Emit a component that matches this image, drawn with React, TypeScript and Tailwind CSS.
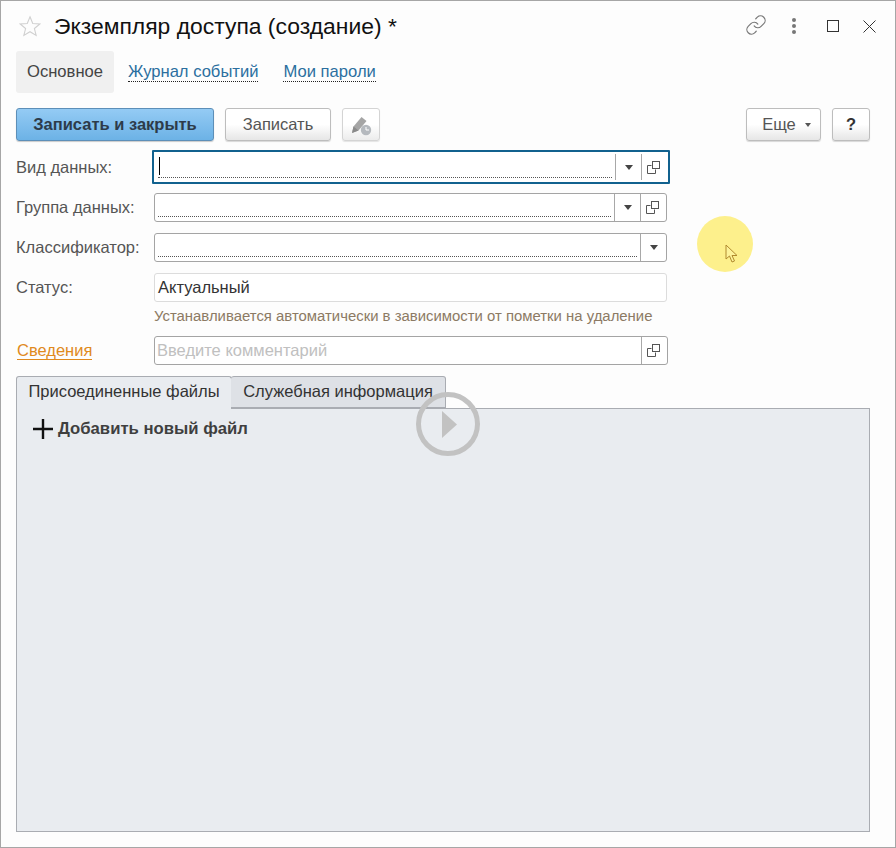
import { Link } from 'lucide-react';

function CopyIcon() {
  return (
    <svg className="mr-[2px]" width="13" height="13" viewBox="0 0 13 13" fill="none" stroke="#555" strokeWidth="1">
      <path d="M4.5 4.5H.5v8h8V8.5" />
      <rect x="5.5" y=".5" width="7" height="7" />
    </svg>
  );
}

function Caret() {
  return (
    <svg width="8" height="5" viewBox="0 0 8 5">
      <path d="M0 0h8L4 5z" fill="#444" />
    </svg>
  );
}

function SideButton({ children }: { children: React.ReactNode }) {
  return (
    <div className="flex h-full w-[26px] shrink-0 items-center justify-center border-l border-[#a8a8a8]">
      {children}
    </div>
  );
}

function Label({ children }: { children: React.ReactNode }) {
  return <div className="w-[138px] shrink-0 text-[16.5px] text-[#555]">{children}</div>;
}

function Dotted() {
  return (
    <div className="relative mr-[3px] h-[19px] flex-1">
      <div className="absolute inset-x-0 bottom-0 border-b border-dotted border-[#555]" />
    </div>
  );
}

function PencilClock() {
  return (
    <svg width="22" height="22" viewBox="0 0 22 22">
      <path d="M2 19l1.5-6.5L11.5 3l5 4-8 9.5z" fill="#a5a5a5" />
      <path d="M2 19l1.5-6.5 5 4z" fill="#8a8a8a" />
      <circle cx="16" cy="16" r="5.2" fill="#b5b9be" />
      <path d="M16 13v3h3" stroke="#fff" strokeWidth="1" fill="none" />
    </svg>
  );
}

export default function App() {
  return (
    <div className="relative flex h-[848px] w-[896px] flex-col border border-[#a6a6a6] bg-[#fdfdfd] font-['Liberation_Sans',sans-serif]">
      <div className="flex h-[50px] shrink-0 items-center pl-[18px] pr-[19px]">
        <svg width="22" height="22" viewBox="0 0 24 24" fill="none" stroke="#d0d0d0" strokeWidth="1.2">
          <path d="M12 2l3 7.2 7.7.6-5.9 5 1.9 7.5L12 18.2l-6.7 4.1 1.9-7.5-5.9-5L9 9.2z" />
        </svg>
        <h1 className="ml-[13px] text-[22.9px] font-normal leading-none text-[#111]">Экземпляр доступа (создание) *</h1>
        <div className="ml-auto flex items-center">
          <Link className="-mt-[3px] h-[22px] w-[22px] text-[#777]" strokeWidth={1.3} />
          <div className="ml-[25px] flex flex-col gap-[2px]">
            <div className="h-[4px] w-[4px] rounded-full bg-[#777]" />
            <div className="h-[4px] w-[4px] rounded-full bg-[#777]" />
            <div className="h-[4px] w-[4px] rounded-full bg-[#777]" />
          </div>
          <div className="ml-[31px] h-[12px] w-[12px] border border-[#333]" />
          <svg className="ml-[24px]" width="13" height="13" viewBox="0 0 13 13" stroke="#333" strokeWidth="1">
            <path d="M.5.5l12 12M12.5.5l-12 12" />
          </svg>
        </div>
      </div>

      <nav className="ml-[15px] flex h-[42px] shrink-0 items-center text-[16.6px]">
        <div className="flex h-[42px] w-[98px] items-center justify-center rounded-[3px] bg-[#f0f0f0] text-[#444]">Основное</div>
        <a className="ml-[14px] border-b border-dotted border-[#222] leading-[18px] text-[#2b6f9f]">Журнал событий</a>
        <a className="ml-[25px] border-b border-dotted border-[#222] leading-[18px] text-[#2b6f9f]">Мои пароли</a>
      </nav>

      <div className="ml-[15px] mr-[25px] mt-[15px] flex h-[33px] shrink-0 items-stretch text-[16.5px]">
        <button className="w-[198px] rounded-[3px] border border-[#5d8fb8] bg-gradient-to-b from-[#94cbf4] to-[#6cb2e6] font-bold text-[#2d3b4a] shadow-[0_1px_1px_rgba(0,0,0,0.2)]">
          Записать и закрыть
        </button>
        <button className="ml-[11px] w-[106px] rounded-[3px] border border-[#bdbdbd] bg-gradient-to-b from-white via-white to-[#e6e6e6] text-[#555] shadow-[0_1px_1px_rgba(0,0,0,0.15)]">
          Записать
        </button>
        <button className="ml-[11px] flex w-[38px] items-center justify-center rounded-[3px] border border-[#d4d4d4] bg-gradient-to-b from-white via-white to-[#ececec] shadow-[0_1px_1px_rgba(0,0,0,0.1)]">
          <PencilClock />
        </button>
        <button className="ml-auto flex w-[75px] items-center justify-center gap-[9px] rounded-[3px] border border-[#bdbdbd] bg-gradient-to-b from-white via-white to-[#e6e6e6] pl-[6px] text-[#555] shadow-[0_1px_1px_rgba(0,0,0,0.15)]">
          Еще
          <svg width="6" height="4" viewBox="0 0 6 4"><path d="M0 0h6L3 4z" fill="#555" /></svg>
        </button>
        <button className="ml-[11px] w-[38px] rounded-[3px] border border-[#bdbdbd] bg-gradient-to-b from-white via-white to-[#e6e6e6] font-bold text-[#333] shadow-[0_1px_1px_rgba(0,0,0,0.15)]">
          ?
        </button>
      </div>

      <div className="ml-[15px] mt-[9px] flex shrink-0 flex-col">
        <div className="flex h-[34px] items-center">
          <Label>Вид данных:</Label>
          <div className="-ml-[2px] flex h-[34px] w-[518px] items-center rounded-[1px] border-2 border-[#11618e] bg-white py-[2px] pl-[4px] pr-[1px]">
            <div className="relative mr-[3px] h-[22px] flex-1">
              <div className="ml-[1px] mt-[1px] h-[18px] w-[1px] bg-black" />
              <div className="absolute inset-x-0 bottom-0 border-b border-dotted border-[#555]" />
            </div>
            <SideButton><Caret /></SideButton>
            <SideButton><CopyIcon /></SideButton>
          </div>
        </div>
        <div className="mt-[9px] flex h-[29px] items-center">
          <Label>Группа данных:</Label>
          <div className="flex h-[29px] w-[513px] items-center rounded-[3px] border border-[#a4a4a4] bg-white pl-[3px]">
            <Dotted />
            <SideButton><Caret /></SideButton>
            <SideButton><CopyIcon /></SideButton>
          </div>
        </div>
        <div className="mt-[11px] flex h-[29px] items-center">
          <Label>Классификатор:</Label>
          <div className="flex h-[29px] w-[513px] items-center rounded-[3px] border border-[#a4a4a4] bg-white pl-[3px]">
            <Dotted />
            <SideButton><Caret /></SideButton>
          </div>
        </div>
        <div className="mt-[11px] flex h-[29px] items-center">
          <Label>Статус:</Label>
          <div className="flex h-[29px] w-[513px] items-center rounded-[3px] border border-[#dcdcdc] bg-white pl-[3px] text-[16.5px] text-[#333]">
            Актуальный
          </div>
        </div>
        <div className="ml-[138px] mt-[6px] h-[17px] text-[14.9px] leading-[17px] text-[#8c7a64]">
          Устанавливается автоматически в зависимости от пометки на удаление
        </div>
        <div className="mt-[11px] flex h-[29px] items-center">
          <a className="ml-[1px] w-[137px] shrink-0 text-[16.5px] leading-[19px] text-[#e08a1e]">
            <span className="border-b border-[#e08a1e]">Сведения</span>
          </a>
          <div className="flex h-[29px] w-[514px] items-center rounded-[3px] border border-[#a4a4a4] bg-white pl-[2px] text-[16.5px] text-[#c0c0c0]">
            <span className="flex-1">Введите комментарий</span>
            <SideButton><CopyIcon /></SideButton>
          </div>
        </div>
      </div>

      <div className="mb-[15px] ml-[15px] mr-[25px] mt-[11px] flex min-h-0 flex-1 flex-col">
        <div className="relative z-10 flex h-[33px] shrink-0 text-[16.5px]">
          <div className="flex w-[216px] items-center justify-center rounded-t-[3px] border border-b-0 border-[#a9acb2] bg-[#e9ecf0] pb-[3px] text-[#333]">
            Присоединенные файлы
          </div>
          <div className="-ml-[1px] flex h-[32px] w-[215px] items-center justify-center rounded-t-[3px] border border-l-0 border-[#a9acb2] bg-[#dee1e6] pb-[2px] text-[#333]">
            Служебная информация
          </div>
        </div>
        <div className="-mt-[1px] flex-1 border border-[#a9acb2] bg-[#e9ecf0] pl-[16px] pt-[8px]">
          <div className="flex items-center text-[16.7px] font-bold text-[#3f3f3f]">
            <svg width="20" height="20" viewBox="0 0 20 20" stroke="#111" strokeWidth="2.4">
              <path d="M10 0v20M0 10h20" />
            </svg>
            <span className="ml-[5px] -mt-[1px]">Добавить новый файл</span>
          </div>
        </div>
      </div>

      {/* play overlay of the recording */}
      <div className="absolute left-[415px] top-[391px] z-20 h-[64px] w-[64px]">
        <svg width="64" height="64" viewBox="0 0 64 64" fill="none">
          <circle cx="32" cy="32" r="29.5" stroke="#c2c2c2" strokeWidth="5" />
          <path d="M26 19l15 13.5L26 46z" fill="#c2c2c2" />
        </svg>
      </div>

      {/* cursor highlight */}
      <div className="absolute left-[696px] top-[215px] z-20 h-[56px] w-[56px] rounded-full bg-[radial-gradient(circle,#fdf08c_0%,#fdf08c_78%,#fdf6b8_88%,rgba(253,246,184,0)_100%)]">
        <svg className="absolute left-[28px] top-[28px]" width="14" height="20" viewBox="0 0 14 20" fill="#fdf39a" stroke="#b08a2e" strokeWidth="1">
          <path d="M1 1v14l3.5-3 2.5 6 2.5-1-2.5-5.5H12z" />
        </svg>
      </div>
    </div>
  );
}
